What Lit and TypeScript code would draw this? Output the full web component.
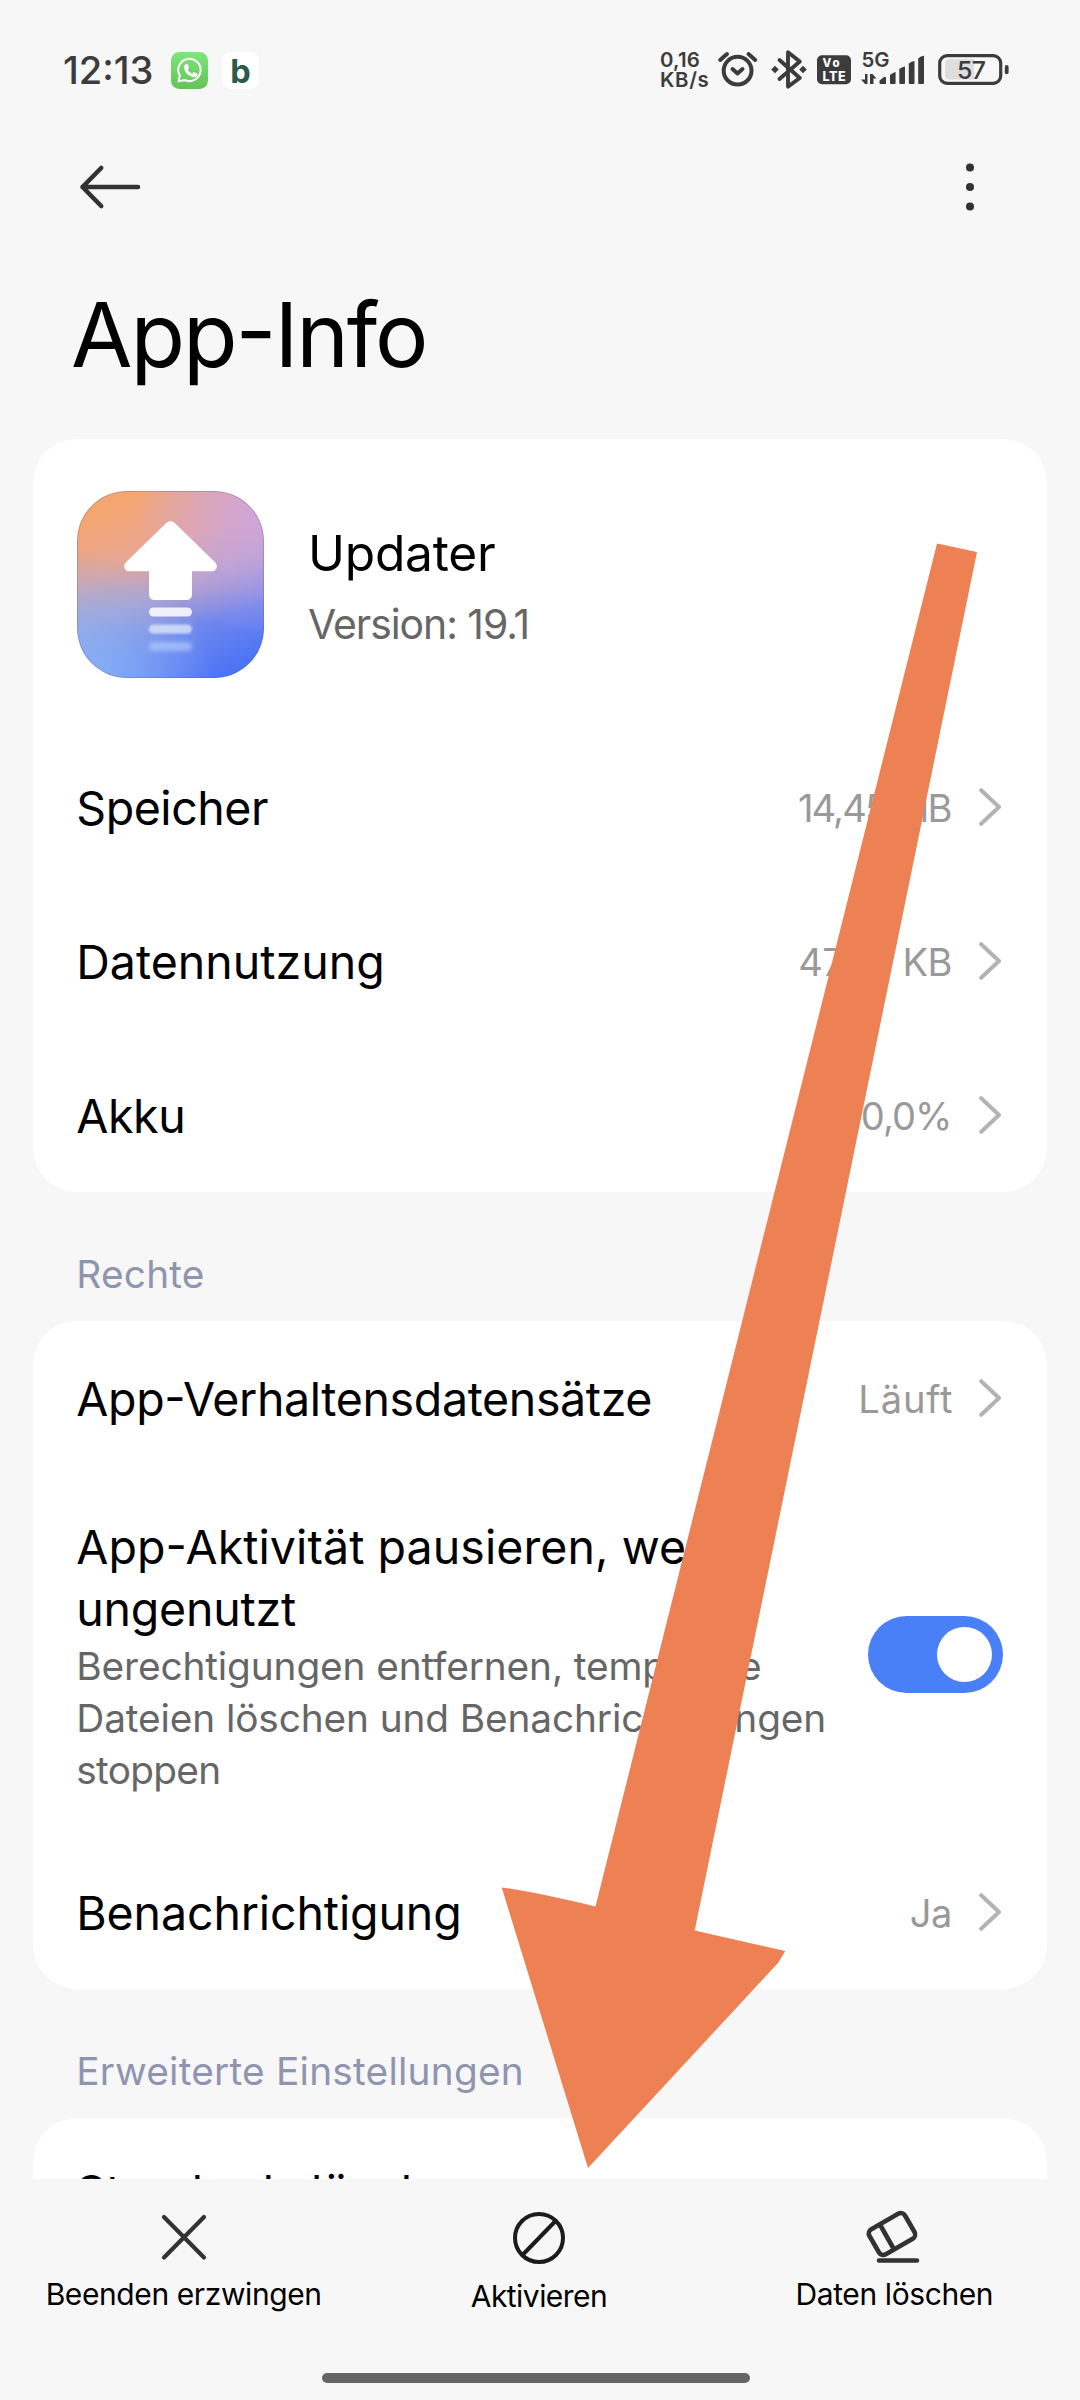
import { LitElement, html, css, svg } from "lit";
import { customElement, property } from "lit/decorators.js";

interface Entry {
  label: string;
  tracking: number;
  value?: string;
  valueTracking?: number;
}

const USAGE: Entry[] = [
  { label: "Speicher", tracking: -0.45, value: "14,45 MB", valueTracking: -1.85 },
  { label: "Datennutzung", tracking: 0, value: "47,87 KB", valueTracking: -0.5 },
  { label: "Akku", tracking: -0.4, value: "0,0%", valueTracking: -0.9 },
];

const chevron = svg`<path d="M2.2 2.2 20 19 2.2 35.8" fill="none" stroke="#b3b3b3" stroke-width="4" stroke-linecap="round" stroke-linejoin="round"/>`;

/** One settings line: label on the left, optional value and chevron on the right. */
@customElement("setting-row")
class SettingRow extends LitElement {
  @property({ attribute: false }) entry!: Entry;

  static styles = css`
    :host { display: flex; align-items: center; height: 154px; padding: 0 46.5px 0 43.3px; }
    .label { flex: 1; padding-top: 2px; font-size: 46.5px; line-height: 62px; color: #000; white-space: nowrap; font-feature-settings: "case"; }
    .value { padding-top: 2px; font-size: 38.1px; line-height: 50px; color: #999; white-space: nowrap; }
    .chevron { width: 22px; height: 38px; margin-left: 26px; flex: none; }
  `;

  render() {
    const { label, tracking, value, valueTracking = 0 } = this.entry;
    return html`
      <span class="label" style="letter-spacing:${tracking}px">${label}</span>
      ${value
        ? html`<span class="value" style="letter-spacing:${valueTracking}px;margin-right:${-valueTracking}px">${value}</span>
            <svg class="chevron" viewBox="0 0 22 38">${chevron}</svg>`
        : null}
    `;
  }
}

@customElement("status-bar")
class StatusBar extends LitElement {
  static styles = css`
    :host { display: flex; align-items: center; height: 140px; padding: 0 64px 0 63px; color: #3c3c3c; }
    .clock { width: 108px; font-size: 38.1px; line-height: 46px; letter-spacing: 0; font-weight: 450; }
    .app { width: 37px; height: 37px; margin-right: 14px; }
    .fill { flex: 1; }
    .speed { width: 54px; font-size: 20.4px; line-height: 20px; font-weight: 600; white-space: nowrap; }
    .rate { display: block; letter-spacing: 0.2px; }
    .unit { display: block; letter-spacing: 0.7px; }
    .sys { height: 50px; flex: none; display: block; }
    .alarm { width: 50px; }
    .bt { width: 48px; }
    .volte { width: 44px; }
    .signal { width: 75px; }
    .battery { width: 85px; }
  `;

  render() {
    return html`
      <span class="clock">12:13</span>
      <svg class="app" viewBox="0 0 37 37">
        <defs>
          <linearGradient id="wa" x1="0" y1="0" x2="0" y2="1">
            <stop offset="0" stop-color="#80e57b" /><stop offset="1" stop-color="#62c358" />
          </linearGradient>
        </defs>
        <rect width="37" height="37" rx="8.5" fill="url(#wa)" />
        <path d="M7.6 29.4 8.8 23.6A11.2 11.2 0 1 1 13.6 28Z" fill="none" stroke="#fff" stroke-width="2" stroke-linejoin="round" />
        <path d="M14.7 12.3c.7-.6 1.600-.5 2 .3l1.100 2.500c.2.500.1 1-.3 1.400l-.8 1c1 2 2.500 3.300 4.500 4.200l1-1.200c.4-.4.9-.5 1.400-.3l2.400 1.200c.6.300.7.800.5 1.400-.7 2-2.700 2.900-4.800 2.200-4.300-1.300-7.300-4.100-8.500-7.900-.6-1.900.1-3.700 1.500-4.800Z" fill="#fff" />
      </svg>
      <svg class="app" viewBox="0 0 37 37">
        <rect width="37" height="37" rx="8.5" fill="#fff" />
        <text x="8.2" y="30.800" font-size="32.500" font-weight="650" font-family="Inter, sans-serif" fill="#2b5b4c">b</text>
      </svg>
      <span class="fill"></span>
      <span class="speed"><span class="rate">0,16</span><span class="unit">KB/s</span></span>
      <svg class="sys alarm" viewBox="714 45 50 50" fill="none" stroke="#3c3c3c" stroke-width="4" stroke-linecap="round" stroke-linejoin="round">
        <circle cx="737.6" cy="70.7" r="13.9" />
        <path d="M720.2 60 727 54M748.5 54 755.2 60M732.5 69 737.5 73.5 742.5 69" />
      </svg>
      <svg class="sys bt" viewBox="764 45 48 50">
        <path d="M779.5 60 799.8 78 788 86.6V52.2L799.8 61.5 779.5 79" fill="none" stroke="#3c3c3c" stroke-width="3.9" stroke-linecap="round" stroke-linejoin="round" />
        <path d="M775 65.7l3.8 3.8-3.8 3.8-3.8-3.8ZM803 65.7l3.8 3.8-3.8 3.8-3.8-3.8Z" fill="#3c3c3c" />
      </svg>
      <svg class="sys volte" viewBox="812 45 44 50" fill="#fff" font-family="Inter, sans-serif" font-weight="800">
        <rect x="817" y="55.3" width="34" height="29" rx="5" fill="#3c3c3c" />
        <text x="822.5" y="67.3" font-size="11.5" textLength="17">Vo</text>
        <text x="822.5" y="81.3" font-size="12.500" textLength="23">LTE</text>
      </svg>
      <svg class="sys signal" viewBox="856 45 75 50" fill="#3c3c3c">
        <text x="861.5" y="67" font-size="20.4" font-weight="600" font-family="Inter, sans-serif">5G</text>
        <path d="M865 74h2.500v10H865l-4-4.500h4ZM870 84V74h2.500l4 4.500h-3V84Z" />
        <path d="M879.5 80.5 884 77h2v7h-5.500q-1 0-1-1ZM890 75q3-2.500 5.600-3v11q0 1-1 1h-3.600q-1 0-1-1ZM899.300 69q3-2.500 5.700-2.500V83q0 1-1 1h-3.700q-1 0-1-1ZM908.800 63.500q2.500-2.500 5.700-2.500v22q0 1-1 1h-3.700q-1 0-1-1ZM918.200 58.500q2.500-2.800 5.800-2.800V83q0 1-1 1h-3.800q-1 0-1-1Z" />
      </svg>
      <svg class="sys battery" viewBox="931 45 85 50">
        <rect x="939.7" y="55.6" width="61" height="27.8" rx="7.5" fill="none" stroke="#3c3c3c" stroke-width="3.2" />
        <path d="M950 59h24v20.500h-24q-5 0-5-5v-10.500q0-5 5-5Z" fill="#dedede" />
        <rect x="1004.8" y="65" width="3.8" height="9.2" rx="1.9" fill="#3c3c3c" />
        <text x="957" y="79" font-size="24.8" font-family="Inter, sans-serif" font-weight="450" letter-spacing="-0.7" fill="#3c3c3c">57</text>
      </svg>
    `;
  }
}

@customElement("app-root")
class AppRoot extends LitElement {
  static styles = css`
    :host { display: block; }
    .screen { position: relative; display: flex; flex-direction: column; width: 1080px; height: 2400px; background: #f7f7f7; font-family: Inter, Roboto, sans-serif; color: #000; overflow: hidden; }
    .content { height: 2179px; flex: none; overflow: hidden; }
    .toolbar { display: flex; align-items: center; justify-content: space-between; height: 94px; padding: 0 100px 0 78px; }
    .back { width: 64px; height: 48px; }
    .more { width: 20px; height: 50px; }
    .title { margin: 0; height: 205px; box-sizing: border-box; padding: 0 0 2px 71px; font-size: 89.2px; line-height: 203px; font-weight: 400; letter-spacing: -2.1px; font-feature-settings: "case"; }
    .card { margin: 0 33px; background: #fff; border-radius: 44px; overflow: hidden; }
    .head { display: flex; align-items: flex-start; height: 291px; box-sizing: border-box; padding: 52px 44px 0; gap: 44px; }
    .icon { width: 187px; height: 187px; border-radius: 50px; flex: none;
      background:
        radial-gradient(circle 130px at 100% 8%, rgba(206, 166, 226, 0.9) 0%, rgba(203, 166, 226, 0.6) 40%, rgba(190, 160, 230, 0) 100%),
        radial-gradient(circle 140px at 0% 105%, rgba(136, 180, 246, 1) 0%, rgba(132, 174, 246, 0.7) 45%, rgba(132, 170, 246, 0) 100%),
        linear-gradient(156deg, #f4a570 12%, #eaa693 34%, #b8a2c8 52%, #6d85ee 71%, #4c74f7 92%);
      box-shadow: inset 0 0 0 1px rgba(90, 90, 140, 0.3); }
    .glyph { display: block; width: 187px; height: 187px; }
    .name { margin-top: 26.5px; line-height: 71px; white-space: nowrap; }
    .app { font-size: 49.7px; letter-spacing: -0.25px; }
    .version { font-size: 40.9px; letter-spacing: -1.05px; color: #666; }
    .section { height: 129px; box-sizing: border-box; padding: 56.5px 76.3px 0; font-size: 38.8px; line-height: 50px; color: #8f95af; white-space: nowrap; letter-spacing: 0.22px; }
    .pause { display: flex; align-items: center; height: 359px; padding: 0 44px 1px 43.3px; }
    .text { flex: 1; padding-top: 3px; white-space: nowrap; }
    .line { display: block; font-size: 46.5px; line-height: 62px; font-feature-settings: "case"; }
    .sub { display: block; font-size: 38.8px; line-height: 52px; letter-spacing: -0.12px; color: #666; }
    .line1 { letter-spacing: 0.08px; }
    .line2 { letter-spacing: -0.22px; }
    .tight { letter-spacing: -0.7px; }
    .switch { display: flex; align-items: center; justify-content: flex-end; width: 135px; height: 77px; box-sizing: border-box; padding-right: 11px; border-radius: 39px; background: #4a80f7; flex: none; }
    .knob { width: 55px; height: 55px; border-radius: 50%; background: #fff; }
    .cut { height: 146px; }
    .actions { display: grid; grid-template-columns: repeat(3, 1fr); height: 194px; box-sizing: border-box; padding: 29px 8px 0 6px; }
    .action { display: flex; flex-direction: column; align-items: center; gap: 8px; font-size: 30px; line-height: 36px; white-space: nowrap; letter-spacing: -0.4px; }
    .mid { gap: 10px; letter-spacing: -0.55px; }
    .aicon { width: 60px; height: 60px; }
    .home { width: 428px; height: 10px; margin-left: 322px; border-radius: 5px; background: #666; }
    .pointer { position: absolute; left: 0; top: 0; width: 1080px; height: 2400px; pointer-events: none; }
  `;

  render() {
    return html`
      <div class="screen">
        <div class="content">
          <status-bar></status-bar>
          <div class="toolbar">
            <svg class="back" viewBox="0 0 64 48" fill="none" stroke="#323232" stroke-width="4.6" stroke-linecap="round" stroke-linejoin="round">
              <path d="M60 24H4.5M23.2 5 4.5 24 23.2 43" />
            </svg>
            <svg class="more" viewBox="0 0 20 50" fill="#323232">
              <circle cx="10" cy="5.5" r="4" /><circle cx="10" cy="25" r="4" /><circle cx="10" cy="44.5" r="4" />
            </svg>
          </div>
          <h1 class="title">App-Info</h1>

          <div class="card">
            <div class="head">
              <div class="icon">
                <svg class="glyph" viewBox="0 0 187 187">
                  <defs>
                    <filter id="soft" x="-20%" y="-80%" width="140%" height="260%"><feGaussianBlur stdDeviation="1.2" /></filter>
                    <filter id="softer" x="-20%" y="-80%" width="140%" height="260%"><feGaussianBlur stdDeviation="2" /></filter>
                  </defs>
                  <path d="M89.5 31.8q4-3.600 8 0L138.300 71.500q2.500 3 1 6-1.200 2.700-4.500 2.700H115V103q0 6-6 6H78q-6 0-6-6V80.200H52.200q-3.300 0-4.500-2.700-1.500-3 1-6Z" fill="#fff" />
                  <rect x="72" y="116.5" width="43" height="9" rx="4.5" fill="#fff" opacity="0.85" />
                  <rect x="72" y="133.5" width="43" height="9" rx="4.5" fill="#dbe6fb" opacity="0.8" filter="url(#soft)" />
                  <rect x="72" y="151" width="43" height="9" rx="4.5" fill="#b9d4fb" opacity="0.6" filter="url(#softer)" />
                </svg>
              </div>
              <div class="name">
                <div class="app">Updater</div>
                <div class="version">Version: 19.1</div>
              </div>
            </div>
            ${USAGE.map((entry) => html`<setting-row .entry=${entry}></setting-row>`)}
          </div>

          <div class="section">Rechte</div>
          <div class="card">
            <setting-row .entry=${{ label: "App-Verhaltensdatensätze", tracking: -0.36, value: "Läuft", valueTracking: 0.9 }}></setting-row>
            <div class="pause">
              <div class="text">
                <span class="line line1">App-Aktivität pausieren, wenn</span>
                <span class="line line2">ungenutzt</span>
                <span class="sub">Berechtigungen entfernen, temporäre</span>
                <span class="sub">Dateien löschen und Benachrichtigungen</span>
                <span class="sub tight">stoppen</span>
              </div>
              <div class="switch"><div class="knob"></div></div>
            </div>
            <setting-row .entry=${{ label: "Benachrichtigung", tracking: -0.12, value: "Ja", valueTracking: -0.3 }}></setting-row>
          </div>

          <div class="section">Erweiterte Einstellungen</div>
          <div class="card">
            <setting-row class="cut" .entry=${{ label: "Standards löschen", tracking: -0.15 }}></setting-row>
          </div>
        </div>

        <div class="actions">
          <div class="action">
            <svg class="aicon" viewBox="0 0 60 60" fill="none" stroke="#323232" stroke-width="4.2" stroke-linecap="round"><path d="M10 9 50 49.5M50 9 10 49.5" /></svg>
            <span>Beenden erzwingen</span>
          </div>
          <div class="action mid">
            <svg class="aicon" viewBox="0 0 60 60" fill="none" stroke="#1c1c1c" stroke-width="4"><circle cx="30" cy="30" r="24" /><path d="M13.5 47 46.5 13" /></svg>
            <span>Aktivieren</span>
          </div>
          <div class="action">
            <svg class="aicon" viewBox="0 0 60 60" fill="none" stroke="#323232" stroke-width="4.6" stroke-linejoin="round" stroke-linecap="round">
              <rect x="7.5" y="11.5" width="41" height="29" rx="5" transform="rotate(-30 28 26)" />
              <path d="M16.5 17.5 29.500 40.500M15 52.500H53" />
            </svg>
            <span>Daten löschen</span>
          </div>
        </div>
        <div class="home"></div>

        <svg class="pointer" viewBox="0 0 1080 2400">
          <path d="M937 543.5 977 552 694.7 1930.5 785.3 1951 778 1963 588 2168 501.7 1887.500Q530 1891 595.500 1906.500Z" fill="#ee8153" />
        </svg>
      </div>
    `;
  }
}
